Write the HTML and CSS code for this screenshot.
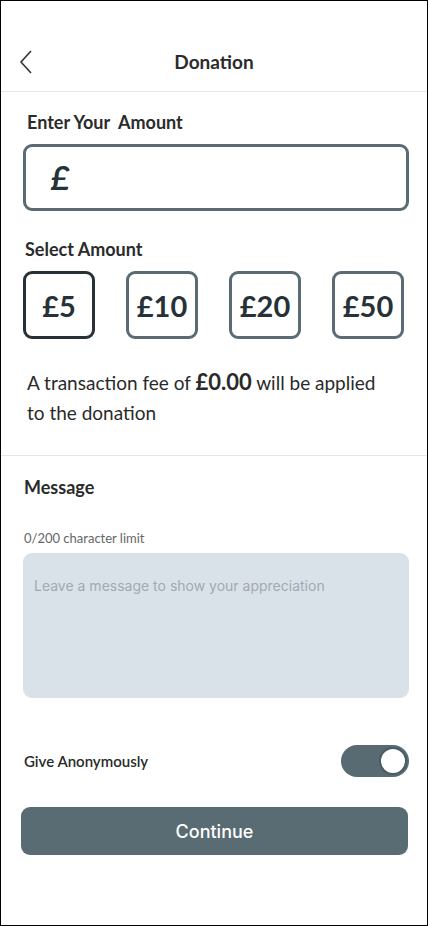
FILE: index.html
```html
<!DOCTYPE html>
<html lang="en">
<head>
    <meta charset="UTF-8">
    <meta name="viewport" content="width=device-width, initial-scale=1.0">
    <title>Donation</title>
    <link rel="stylesheet" href="styles.css">
</head>
<body>
    <div class="phone">
        <div class="header">
            <button class="back" aria-label="Back">
                <svg width="14" height="26" viewBox="0 0 14 26">
                    <polyline points="12,2 2,13 12,24" fill="none" stroke="#333" stroke-width="1.6"/>
                </svg>
            </button>
            <h1>Donation</h1>
        </div>

        <div class="section">
            <h2 class="label-first">Enter Your&nbsp; Amount</h2>
            <div class="amount-input">
                <span class="pound">£</span>
            </div>

            <h2 class="label-select">Select Amount</h2>
            <div class="amounts">
                <button class="amount selected">£5</button>
                <button class="amount">£10</button>
                <button class="amount">£20</button>
                <button class="amount">£50</button>
            </div>

            <p class="fee">
                <span>A transaction fee of</span> <strong>£0.00</strong> <span>will be applied</span><br>
                <span>to the donation</span>
            </p>
        </div>

        <div class="section message-section">
            <h2 class="label-message">Message</h2>
            <div class="limit">0/200 character limit</div>
            <textarea class="message" placeholder="Leave a message to show your appreciation"></textarea>

            <div class="anon-row">
                <span>Give Anonymously</span>
                <div class="toggle"><div class="knob"></div></div>
            </div>

            <button class="continue">Continue</button>
        </div>
    </div>
</body>
</html>
```

FILE: styles.css
```css
body {
    margin: 0;
    padding: 0;
    background: #fff;
    font-family: 'Lato', 'Open Sans', sans-serif;
    color: #2a2a2a;
}

.phone {
    width: 428px;
    height: 926px;
    box-sizing: border-box;
    border: 1px solid #000;
    background: #fff;
}

.header {
    height: 91px;
    padding-top: 40px;
    box-sizing: border-box;
    border-bottom: 1px solid #e6e6e6;
    display: flex;
    align-items: center;
    position: relative;
}

.back {
    border: none;
    background: none;
    padding: 0;
    margin-left: 18px;
    width: 14px;
    height: 26px;
    position: absolute;
    top: 48px;
}

.header h1 {
    margin: 0;
    width: 100%;
    text-align: center;
    font-size: 19px;
    font-weight: 700;
    color: #2b2b2b;
    line-height: 24px;
    margin-top: -8px;
}

.section {
    padding: 0 18px 0 22px;
}

h2 {
    margin: 0;
    font-size: 18px;
    font-weight: 700;
    line-height: 24px;
    color: #2b2b2b;
}

.label-first {
    margin-top: 18px;
    padding-left: 4px;
}

.amount-input {
    margin-top: 10px;
    height: 67px;
    box-sizing: border-box;
    border: 3px solid #5a6b73;
    border-radius: 9px;
    display: flex;
    align-items: center;
    padding-left: 25px;
}

.pound {
    font-size: 32px;
    font-weight: 700;
    font-style: italic;
    color: #263238;
}

.label-select {
    margin-top: 26px;
    padding-left: 2px;
}

.amounts {
    display: flex;
    gap: 31px;
    margin-top: 10px;
}

.amount {
    width: 72px;
    height: 68px;
    box-sizing: border-box;
    border: 3px solid #5a6b73;
    border-radius: 9px;
    background: #fff;
    font-family: 'Lato', sans-serif;
    font-size: 29px;
    font-weight: 700;
    color: #263238;
    padding: 0;
}

.amount.selected {
    border-color: #263238;
}

.fee {
    margin: 29px 0 0;
    padding: 0 0 27px 4px;
    font-size: 19px;
    line-height: 30px;
    color: #2a2a2a;
}

.fee strong {
    font-size: 22px;
    line-height: 20px;
    font-weight: 700;
}

.message-section {
    border-top: 1px solid #e6e6e6;
    padding-left: 22px;
}

.label-message {
    margin-top: 19px;
    padding-left: 1px;
}

.limit {
    margin-top: 30px;
    font-size: 13px;
    line-height: 18px;
    color: #666;
    padding-left: 1px;
}

.message {
    display: block;
    margin-top: 6px;
    width: 100%;
    height: 145px;
    box-sizing: border-box;
    border: none;
    border-radius: 9px;
    background: #dae2e9;
    resize: none;
    padding: 24px 11px;
    font-family: 'Inter', 'Noto Sans', sans-serif;
    font-size: 14px;
}

.message::placeholder {
    color: #a3a9b0;
}

.anon-row {
    margin-top: 47px;
    display: flex;
    justify-content: space-between;
    align-items: center;
    padding-left: 1px;
    font-size: 15px;
    font-weight: 600;
    color: #2a2a2a;
}

.toggle {
    width: 68px;
    height: 32px;
    border-radius: 16px;
    background: #586b73;
    display: flex;
    align-items: center;
    justify-content: flex-end;
    padding-right: 2px;
    box-sizing: border-box;
}

.knob {
    width: 24px;
    height: 24px;
    border-radius: 50%;
    background: #fff;
    border: 2px solid #4a5b62;
}

.continue {
    display: block;
    margin: 30px 0 0 -2px;
    width: 387px;
    height: 48px;
    border: none;
    border-radius: 9px;
    background: #596b73;
    color: #fff;
    font-family: 'Inter', 'Noto Sans', sans-serif;
    font-size: 18px;
    font-weight: 500;
}
```
